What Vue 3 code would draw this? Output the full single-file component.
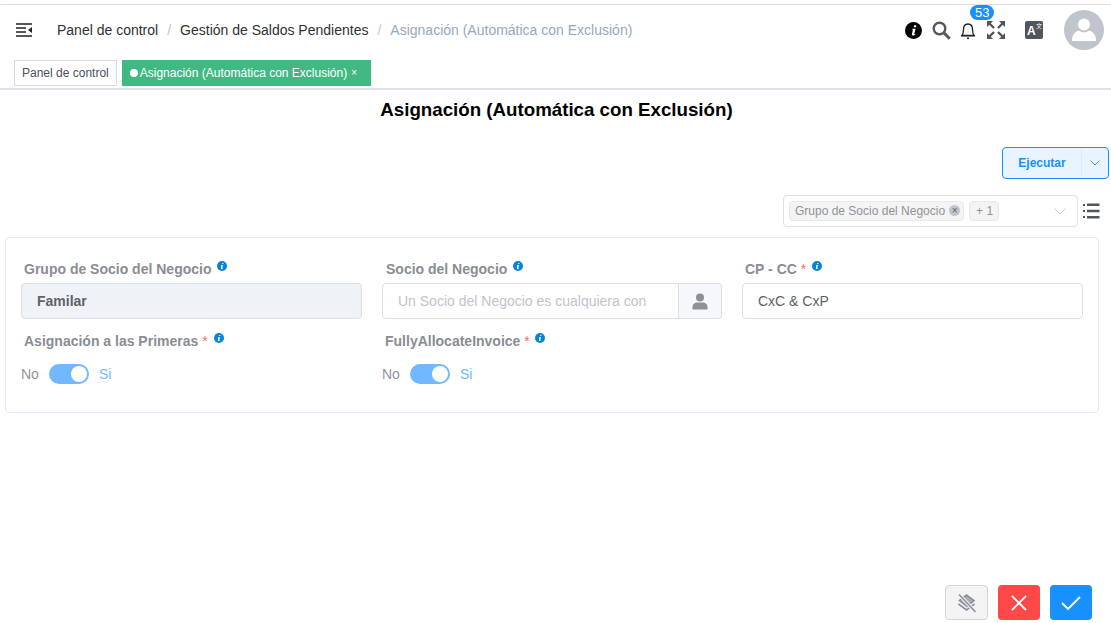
<script setup>
const crumbs = ['Panel de control', 'Gestión de Saldos Pendientes']
</script>

<template>
  <div class="page">
    <div class="topline"></div>
    <header class="navbar">
      <svg class="hamburger" width="17" height="14" viewBox="0 0 17 14">
        <path d="M0 1h16M0 5h10M0 9h10M0 13h16" stroke="#222" stroke-width="1.5" fill="none" />
        <path d="M16 4v6l-4-3z" fill="#222" />
      </svg>
      <nav class="crumbs">
        <template v-for="c in crumbs" :key="c">
          <span class="crumb">{{ c }}</span>
          <span class="sep">/</span>
        </template>
        <span class="crumb last">Asignación (Automática con Exclusión)</span>
      </nav>
      <div class="nav-icons">
        <svg class="ic-info" width="17" height="17" viewBox="0 0 17 17">
          <circle cx="8.5" cy="8.5" r="8.5" fill="#000" />
          <path d="M9.2 3.2h2.2l-.4 2H8.800zM7.800 6.700h2.800l-1.300 5.100c-.1.400.2.500 1 .2l-.2 1c-1.600.7-3.500.6-3.200-.8l1-4.400h-1z" fill="#fff" />
        </svg>
        <svg class="ic-search" width="19" height="19" viewBox="0 0 19 19">
          <circle cx="7.5" cy="7.5" r="5.800" stroke="#555a60" stroke-width="2.400" fill="none" />
          <path d="M11.800 11.800l5.900 5.900" stroke="#555a60" stroke-width="3" />
        </svg>
        <div class="bell">
          <svg width="16" height="19" viewBox="0 0 16 19">
            <path d="M2 14.500c1.300-1.600 1.500-3 1.500-6C3.500 5 5.300 3 8 3s4.500 2 4.500 5.500c0 3 .2 4.400 1.500 6z" stroke="#222" stroke-width="1.300" fill="none" />
            <path d="M1 14.800h14" stroke="#222" stroke-width="1.200" />
            <circle cx="8" cy="17.300" r="1" fill="#222" />
          </svg>
          <span class="badge">53</span>
        </div>
        <svg class="ic-full" width="18" height="18" viewBox="0 0 18 18">
          <g fill="#50565c">
            <path d="M0 0h6L0 6zM18 0v6l-6-6zM0 18v-6l6 6zM18 18h-6l6-6z" />
          </g>
          <path d="M2.500 2.500l4.500 4.500M15.500 2.500 11 7M2.500 15.500 7 11M15.500 15.500 11 11" stroke="#50565c" stroke-width="2.400" />
        </svg>
        <div class="ic-lang">
          <span class="lang-a">A</span>
          <span class="lang-x">文</span>
        </div>
        <div class="avatar">
          <svg width="26" height="26" viewBox="0 0 26 26">
            <circle cx="13" cy="7.500" r="6" fill="#fff" />
            <path d="M1 24c0-6 2.500-9.500 7-10.500 1.500 1.300 3 1.800 5 1.800s3.500-.5 5-1.800c4.500 1 7 4.500 7 10.500z" fill="#fff" />
          </svg>
        </div>
      </div>
    </header>

    <div class="tags">
      <span class="tag">Panel de control</span>
      <span class="tag active"><i class="dot"></i>Asignación (Automática con Exclusión)<small>×</small></span>
    </div>

    <main class="content">
      <h1 class="title">Asignación (Automática con Exclusión)</h1>

      <div class="run-row">
        <div class="run-btn">
          <span class="run-label">Ejecutar</span>
          <span class="run-arrow">
            <svg width="10" height="6" viewBox="0 0 10 6"><path d="M.5.500 5 5 9.500.500" stroke="#409eff" fill="none" /></svg>
          </span>
        </div>
      </div>

      <div class="filter-row">
        <div class="multi">
          <span class="chip">Grupo de Socio del Negocio<i class="chip-x">×</i></span>
          <span class="chip plus">+ 1</span>
          <svg class="multi-arrow" width="12" height="7" viewBox="0 0 12 7"><path d="M.5.500 6 6 11.500.500" stroke="#c0c4cc" fill="none" /></svg>
        </div>
        <svg class="list-ic" width="17" height="16" viewBox="0 0 17 16">
          <path d="M0 1h2v2H0zM0 7h2v2H0zM0 13h2v2H0z" fill="#50565c" />
          <path d="M4 .500h12.500v2.500H4zM4 6.700h12.500v2.500H4zM4 13h12.500v2.500H4z" fill="#50565c" />
        </svg>
      </div>

      <section class="card">
        <div class="field">
          <label class="lbl">Grupo de Socio del Negocio<svg class="tip" width="10" height="10" viewBox="0 0 10 10"><circle cx="5" cy="5" r="5" fill="#0a84d6" /><path d="M5.300 2h1.200l-.2 1.100H5.100zM4.500 4h1.500l-.7 3c0 .3.100.3.500.1l-.1.600c-.9.400-2 .3-1.800-.5l.5-2.600h-.5z" fill="#fff" /></svg></label>
          <div class="input disabled">Familar</div>
        </div>
        <div class="field">
          <label class="lbl shifted">Socio del Negocio<svg class="tip" width="10" height="10" viewBox="0 0 10 10"><circle cx="5" cy="5" r="5" fill="#0a84d6" /><path d="M5.300 2h1.200l-.2 1.100H5.100zM4.500 4h1.500l-.7 3c0 .3.100.3.500.1l-.1.600c-.9.400-2 .3-1.800-.5l.5-2.600h-.5z" fill="#fff" /></svg></label>
          <div class="group">
            <div class="input ph">Un Socio del Negocio es cualquiera con</div>
            <div class="append">
              <svg width="16" height="17" viewBox="0 0 16 17">
                <circle cx="8" cy="4.500" r="4" fill="#8c9097" />
                <path d="M.5 16.500v-2.500c0-3 2.500-4.500 4.500-4.500h6c2 0 4.500 1.500 4.500 4.500v2.500z" fill="#8c9097" />
              </svg>
            </div>
          </div>
        </div>
        <div class="field">
          <label class="lbl">CP - CC <em>*</em><svg class="tip" width="10" height="10" viewBox="0 0 10 10"><circle cx="5" cy="5" r="5" fill="#0a84d6" /><path d="M5.300 2h1.200l-.2 1.100H5.100zM4.500 4h1.500l-.7 3c0 .3.100.3.500.1l-.1.600c-.9.400-2 .3-1.800-.5l.5-2.600h-.5z" fill="#fff" /></svg></label>
          <div class="input value">CxC &amp; CxP</div>
        </div>
        <div class="field">
          <label class="lbl">Asignación a las Primeras <em>*</em><svg class="tip" width="10" height="10" viewBox="0 0 10 10"><circle cx="5" cy="5" r="5" fill="#0a84d6" /><path d="M5.300 2h1.200l-.2 1.100H5.100zM4.500 4h1.500l-.7 3c0 .3.100.3.500.1l-.1.600c-.9.400-2 .3-1.800-.5l.5-2.600h-.5z" fill="#fff" /></svg></label>
          <div class="switch-row"><span>No</span><i class="switch"></i><span class="on">Si</span></div>
        </div>
        <div class="field">
          <label class="lbl">FullyAllocateInvoice <em>*</em><svg class="tip narrow" width="10" height="10" viewBox="0 0 10 10"><circle cx="5" cy="5" r="5" fill="#0a84d6" /><path d="M5.300 2h1.200l-.2 1.100H5.100zM4.500 4h1.500l-.7 3c0 .3.100.3.500.1l-.1.600c-.9.400-2 .3-1.800-.5l.5-2.600h-.5z" fill="#fff" /></svg></label>
          <div class="switch-row"><span>No</span><i class="switch"></i><span class="on">Si</span></div>
        </div>
      </section>

      <footer class="actions">
        <button class="act grey">
          <svg width="22" height="22" viewBox="0 0 22 22" fill="none" stroke="#8c9097" stroke-width="1.600">
            <path d="M3.500 8.500 10.500 3l7.500 5.500-7 6z" fill="#a9adb3" />
            <path d="M2.500 12 10.500 18l8-6" />
            <path d="M3 2.500l16.500 17.500" stroke="#f4f4f5" stroke-width="3.500" />
            <path d="M3 2.500l16.500 17.500" />
          </svg>
        </button>
        <button class="act red">
          <svg width="16" height="16" viewBox="0 0 16 16"><path d="M1 1l14 14M15 1 1 15" stroke="#fff" stroke-width="1.800" /></svg>
        </button>
        <button class="act blue">
          <svg width="20" height="14" viewBox="0 0 20 14"><path d="M1 7l6 6L19 1" stroke="#fff" stroke-width="1.800" fill="none" /></svg>
        </button>
      </footer>
    </main>
  </div>
</template>

<style>
html, body { margin: 0; background: #fff; }
</style>

<style scoped>
.page {
  width: 1111px;
  height: 623px;
  overflow: hidden;
  font-family: "Liberation Sans", Arial, sans-serif;
  display: flex;
  flex-direction: column;
  box-sizing: border-box;
}
.topline {
  height: 5px;
  flex: none;
  box-sizing: border-box;
  border-bottom: 1px solid #e2e3e6;
}
.navbar {
  height: 50px;
  flex: none;
  display: flex;
  align-items: center;
  box-shadow: 0 1px 4px rgba(0, 21, 41, 0.08);
  padding-left: 16px;
}
.hamburger { flex: none; }
.crumbs {
  margin-left: 24px;
  font-size: 14px;
  display: flex;
  color: #303133;
}
.sep { color: #c0c4cc; margin: 0 9px; }
.last { color: #97a8be; }
.nav-icons {
  margin-left: auto;
  display: flex;
  align-items: center;
  height: 100%;
  padding-right: 7px;
}
.ic-info { margin-right: 10px; }
.ic-search { margin-right: 9px; }
.bell { position: relative; width: 16px; height: 19px; margin-right: 11px; }
.bell svg { display: block; }
.badge {
  position: absolute;
  top: -16px;
  left: 10px;
  background: #1890ff;
  color: #fff;
  font-size: 13px;
  line-height: 15px;
  height: 15px;
  padding: 0 5px;
  border-radius: 8px;
}
.ic-full { margin-right: 20px; }
.ic-lang {
  width: 18px;
  height: 18px;
  background: #50565c;
  border-radius: 2px;
  position: relative;
  margin-right: 21px;
  color: #fff;
}
.lang-a { position: absolute; left: 2px; top: 3px; font-size: 12px; font-weight: 700; line-height: 14px; }
.lang-x { position: absolute; right: 1px; top: 1px; font-size: 6px; line-height: 8px; font-family: "Noto Sans CJK SC", sans-serif; }
.avatar {
  width: 40px;
  height: 40px;
  border-radius: 50%;
  background: #c0c4cc;
  display: flex;
  align-items: center;
  justify-content: center;
}
.tags {
  height: 35px;
  flex: none;
  display: flex;
  align-items: center;
  padding: 2px 0 0 14px;
  gap: 5px;
  border-bottom: 2px solid #dfe1ea;
  box-sizing: border-box;
  background: #fff;
}
.tag {
  height: 26px;
  box-sizing: border-box;
  border: 1px solid #d8dce5;
  padding: 0 7px;
  font-size: 12px;
  color: #495060;
  display: flex;
  align-items: center;
}
.tag.active {
  background: #42b983;
  border-color: #42b983;
  color: #fff;
  padding-right: 13px;
}
.dot {
  width: 8px;
  height: 8px;
  border-radius: 50%;
  background: #fff;
  margin-right: 2px;
}
.tag small { margin-left: 4px; font-size: 10px; }
.content {
  flex: 1;
  position: relative;
  display: flex;
  flex-direction: column;
}
.title {
  margin: 8px 0 0;
  padding-left: 2px;
  font-size: 18.72px;
  line-height: 24px;
  text-align: center;
  color: #000;
}
.run-row {
  display: flex;
  justify-content: flex-end;
  padding-right: 2px;
  margin-top: 25px;
}
.run-btn {
  width: 107px;
  height: 32px;
  box-sizing: border-box;
  border: 1px solid #1890ff;
  border-radius: 4px;
  background: #e8f4ff;
  display: flex;
  align-items: center;
  font-size: 12px;
  font-weight: 700;
  color: #1890ff;
}
.run-label { flex: 1; text-align: center; border-right: 1px solid #dcecff; line-height: 30px; }
.run-arrow { width: 26px; display: flex; justify-content: center; }
.filter-row {
  display: flex;
  justify-content: flex-end;
  align-items: center;
  margin-top: 16px;
  padding-right: 11px;
}
.multi {
  width: 295px;
  height: 32px;
  box-sizing: border-box;
  border: 1px solid #dfe1e6;
  border-radius: 4px;
  display: flex;
  align-items: center;
  padding: 0 0 1px 5px;
  gap: 5px;
  position: relative;
}
.chip {
  height: 20px;
  background: #f4f4f5;
  border: 1px solid #e9e9eb;
  border-radius: 4px;
  box-sizing: border-box;
  padding: 0 3px 0 5px;
  font-size: 12px;
  color: #909399;
  display: flex;
  align-items: center;
}
.chip.plus { padding: 0 5px 0 6px; }
.chip-x {
  width: 11px;
  height: 11px;
  margin-left: 4px;
  border-radius: 50%;
  background: #c0c4cc;
  color: #606266;
  font-size: 10px;
  font-style: normal;
  line-height: 11px;
  text-align: center;
}
.multi-arrow { position: absolute; right: 11px; top: 12px; }
.list-ic { margin-left: 5px; }
.card {
  margin: 10px 12px 0 5px;
  height: 176px;
  box-sizing: border-box;
  border: 1px solid #e6ebf5;
  border-radius: 4px;
  padding: 21px 15px 0;
  display: grid;
  grid-template-columns: 341px 340px 341px;
  column-gap: 20px;
  grid-template-rows: 72px 60px;
}
.lbl {
  display: block;
  font-size: 14px;
  font-weight: 700;
  color: #8a8d93;
  line-height: 20px;
  padding-left: 3px;
  margin-bottom: 4px;
}
.lbl.shifted { padding-left: 4px; }
.lbl em { color: #f56c6c; font-style: normal; font-weight: 400; }
.tip { margin-left: 6px; vertical-align: 3px; }
.tip.narrow { margin-left: 5px; }
.input {
  height: 36px;
  box-sizing: border-box;
  border: 1px solid #dcdfe6;
  border-radius: 4px;
  padding: 0 15px;
  line-height: 34px;
  font-size: 14px;
  color: #606266;
}
.input.disabled { background: #eff2f7; font-weight: 700; }
.group { display: flex; }
.input.ph {
  flex: 1;
  color: #c0c4cc;
  border-radius: 4px 0 0 4px;
}
.append {
  width: 43px;
  flex: none;
  height: 36px;
  box-sizing: border-box;
  border: 1px solid #dcdfe6;
  border-left: 0;
  border-radius: 0 4px 4px 0;
  background: #f5f7fa;
  display: flex;
  align-items: center;
  justify-content: center;
}
.switch-row {
  display: flex;
  align-items: center;
  height: 20px;
  margin-top: 13px;
  font-size: 14px;
  color: #909399;
}
.switch-row .on { color: #70b8ff; }
.switch {
  width: 40px;
  height: 20px;
  border-radius: 10px;
  background: #70b8ff;
  margin: 0 10px;
  position: relative;
}
.switch::after {
  content: "";
  position: absolute;
  right: 2px;
  top: 2px;
  width: 16px;
  height: 16px;
  border-radius: 50%;
  background: #fff;
}
.actions {
  position: absolute;
  right: 19px;
  bottom: 3px;
  display: flex;
  gap: 10px;
}
.act {
  width: 42px;
  height: 35px;
  border-radius: 4px;
  border: 1px solid transparent;
  padding: 0;
  display: flex;
  align-items: center;
  justify-content: center;
}
.grey { background: #f4f4f5; border-color: #d3d4d6; width: 43px; }
.red { background: #ff4949; }
.blue { background: #1890ff; }
</style>
